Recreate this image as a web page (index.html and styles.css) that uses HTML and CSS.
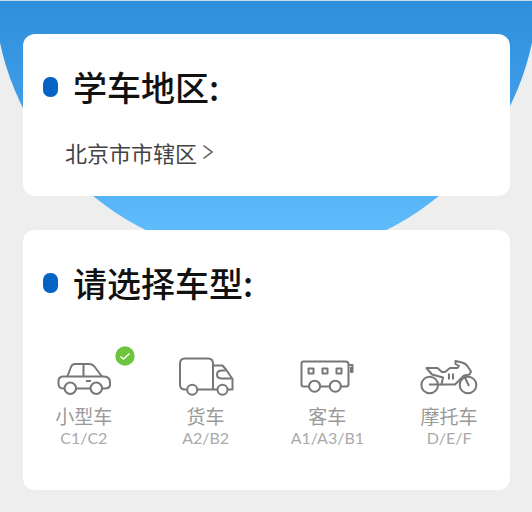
FILE: index.html
```html
<!DOCTYPE html>
<html lang="zh-CN">
<head>
<meta charset="utf-8">
<meta name="viewport" content="width=device-width, initial-scale=1">
<title>学车地区</title>
<link rel="stylesheet" href="styles.css">
</head>
<body>
<div class="backdrop" aria-hidden="true"></div>
<main class="page">
  <section class="card">
    <h2 class="title">学车地区:</h2>
    <button class="region" type="button">北京市市辖区
      <svg class="chevron" viewBox="0 0 12 18" aria-hidden="true"><path d="M1.500 2.500l8.500 6.500-8.500 6.500"/></svg>
    </button>
  </section>
  <section class="card">
    <h2 class="title" id="types-title">请选择车型:</h2>
    <div class="types" role="radiogroup" aria-labelledby="types-title">
      <label class="type">
        <input type="radio" name="type" checked>
        <span class="picture">
          <svg class="icon" viewBox="0 0 60 44" aria-hidden="true">
            <path d="M10.500 33.500H9Q4.500 33 4.500 29V26Q4.500 21.500 9.500 21.500H50Q56 22 56 27V30Q55.500 33.500 51 33.500H48M22 33.500H36.500"/>
            <path d="M13.500 21L17 12Q18 9 21 9H35Q38 9 40 11L48 21.500M29.500 9V21.500M32 26H37"/>
            <circle cx="16.300" cy="33.300" r="5.700"/><circle cx="42.300" cy="33.300" r="5.700"/>
          </svg>
          <svg class="badge" viewBox="0 0 20 20" aria-hidden="true"><circle cx="10" cy="10" r="9.700"/><path d="M5.500 10.500l3 2.500 6-5.500"/></svg>
        </span>
        <span class="name">小型车</span>
        <span class="code">C1/C2</span>
      </label>
      <label class="type">
        <input type="radio" name="type">
        <span class="picture">
          <svg class="icon" viewBox="0 0 60 44" aria-hidden="true">
            <path d="M11 34.500H9Q4 34.500 4 29.500V8.500Q4 3.500 9 3.500H32Q37 3.500 37 8.500V34.500M21.500 34.500H41.300"/>
            <path d="M37 10.500H46.500L50 14.500L56.500 24V34.500H52"/>
            <path d="M49.500 15.500H46Q41 15.500 41 19.500Q41 23.500 46 23.500H55.500"/>
            <circle cx="16.200" cy="34.700" r="5"/><circle cx="46.500" cy="34.700" r="5"/>
          </svg>
        </span>
        <span class="name">货车</span>
        <span class="code">A2/B2</span>
      </label>
      <label class="type">
        <input type="radio" name="type">
        <span class="picture">
          <svg class="icon" viewBox="0 0 60 44" aria-hidden="true">
            <path d="M12 31.500H6.500Q4.500 31.500 4.500 29.500V8.500Q4.500 6.500 6.500 6.500H48.500Q51.500 6.500 51.500 9V29Q51.500 31.500 49 31.500H44M23.300 31.500H32.600M51.500 10H55.500V17H54V12"/>
            <path d="M11.500 13.500h5v5h-5zM25.500 13.500h5v5h-5zM39.500 13.500h5v5h-5z"/>
            <circle cx="17.600" cy="31.200" r="5.500"/><circle cx="38.300" cy="31.200" r="5.500"/>
          </svg>
        </span>
        <span class="name">客车</span>
        <span class="code">A1/A3/B1</span>
      </label>
      <label class="type">
        <input type="radio" name="type">
        <span class="picture">
          <svg class="icon" viewBox="0 0 60 44" aria-hidden="true">
            <circle cx="10.700" cy="30" r="8.300"/><circle cx="49" cy="30" r="8.300"/>
            <path d="M7.500 13H18.500L23 17H26L31 13H38.500L40 11L36.500 9V6L43 7.500Q47 8.500 49 12L52 16.500L50.500 19.500L45 20.500L36 29.500H22.500L24 22.500L13 19.500Z"/>
            <path d="M10 29.500H23M45 20.500L50 31M30 18.500V24.500M34 18.500V24.500"/>
          </svg>
        </span>
        <span class="name">摩托车</span>
        <span class="code">D/E/F</span>
      </label>
    </div>
  </section>
</main>
</body>
</html>
```
FILE: styles.css
```css
* {
  box-sizing: border-box;
}

body {
  margin: 0;
  min-height: 100vh;
  position: relative;
  background: #eeeeee;
  color: #111111;
  font-family: "Noto Sans CJK SC", sans-serif;
}

/* Lower part of a large disc, cut off by the top of the page */
.backdrop {
  position: absolute;
  inset: 0 0 auto;
  height: 258px;
  overflow: hidden;
  border-top: 1px solid #c6dde3;
}

.backdrop::before {
  content: "";
  position: absolute;
  bottom: 0;
  left: -6px;
  right: -6px;
  aspect-ratio: 1;
  border-radius: 50%;
  background: linear-gradient(#2e90dc 53%, #3c9ae6 68%, #5fbcfc 95%);
}

.page {
  position: relative;
  display: flex;
  flex-direction: column;
  gap: 34px;
  padding: 34px 22px 22px 23px;
}

.card {
  padding: 33px 0 32px;
  border-radius: 12px;
  background: #ffffff;
}

.title {
  display: flex;
  align-items: center;
  gap: 15px;
  margin: 0;
  padding: 0 20px;
  font-size: 34px;
  font-weight: 500;
  line-height: 40px;
}

.title::before {
  content: "";
  width: 15px;
  height: 20px;
  border-radius: 7px;
  background: #0563c4;
}

.region {
  display: flex;
  align-items: center;
  gap: 5px;
  margin: 33px 0 0 42px;
  padding: 0;
  border: 0;
  background: none;
  color: #444444;
  font: inherit;
  font-size: 22px;
  line-height: 24px;
}

.chevron {
  width: 12px;
  height: 18px;
  fill: none;
  stroke: #555555;
  stroke-width: 1.5;
}

.types {
  display: grid;
  grid-template-columns: repeat(4, 1fr);
  margin-top: 52px;
  padding-bottom: 10px;
}

.type {
  position: relative;
  display: flex;
  flex-direction: column;
  align-items: center;
  color: #999999;
}

.type input {
  position: absolute;
  opacity: 0;
  margin: 0;
}

.picture {
  position: relative;
  height: 44px;
  margin-bottom: 5px;
}

.icon {
  display: block;
  width: 60px;
  height: 44px;
  fill: none;
  stroke: #777777;
  stroke-width: 2;
  stroke-linejoin: round;
}

.badge {
  position: absolute;
  top: -9px;
  right: -21px;
  width: 20px;
  height: 20px;
  fill: #6cc53c;
}

.badge path {
  fill: none;
  stroke: #ffffff;
  stroke-width: 1.5;
}

.name {
  font-size: 19px;
  line-height: 24px;
}

.code {
  color: #aaaaaa;
  font-family: Lato, sans-serif;
  font-size: 16px;
  line-height: 20px;
}
```
